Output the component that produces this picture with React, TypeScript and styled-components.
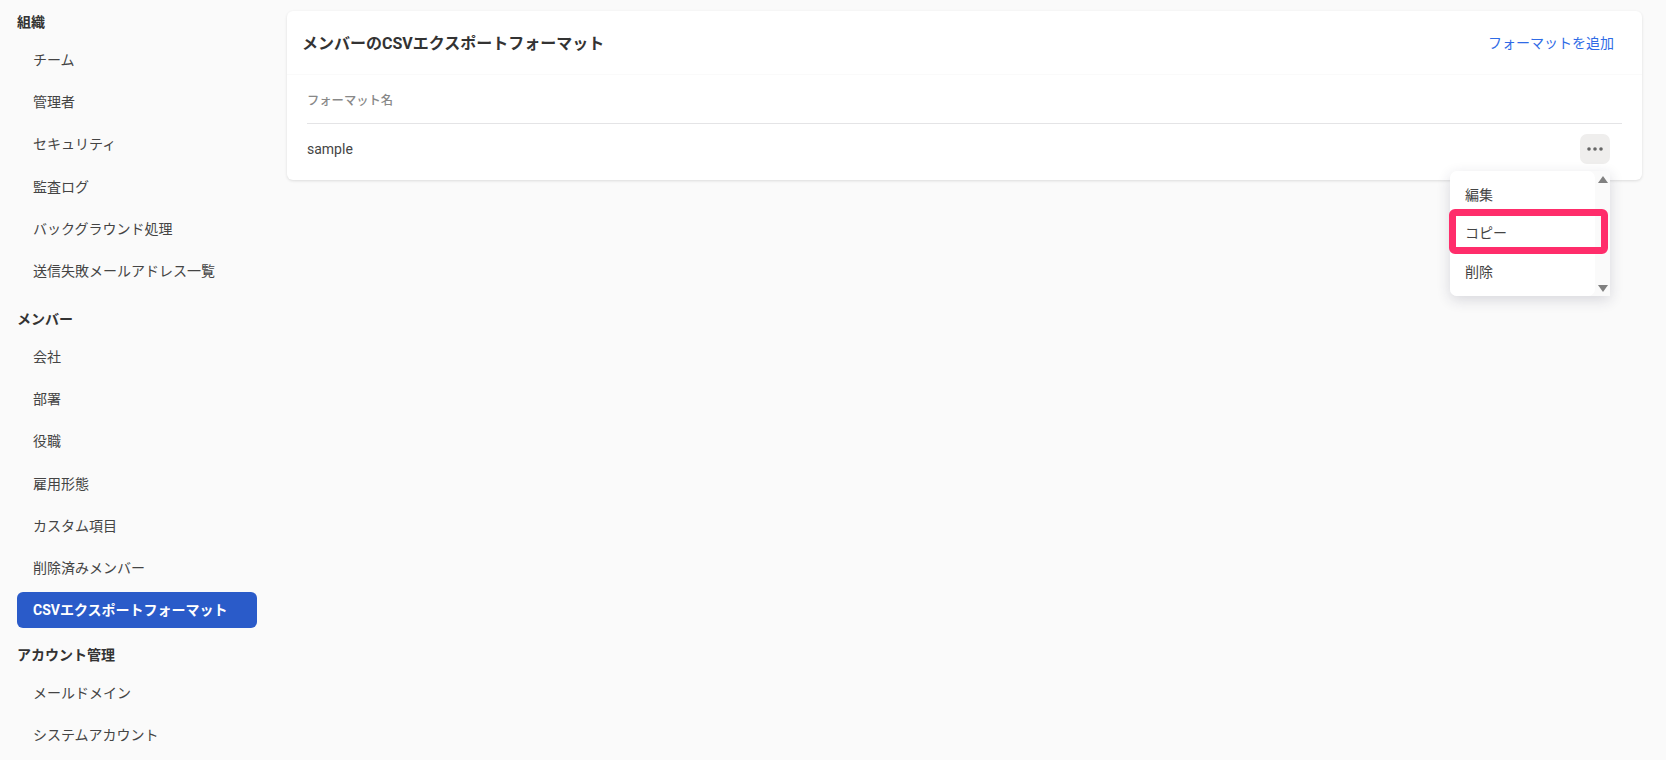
import React from "react";
import styled, { createGlobalStyle } from "styled-components";

const Global = createGlobalStyle`
  html, body { margin: 0; padding: 0; height: 100%; overflow: hidden; background: #fafafa; }
  body { font-family: Roboto, "Noto Sans CJK JP", "Liberation Sans", sans-serif; color: #333; }
`;

const Page = styled.div`
  display: flex;
  width: 1666px;
  height: 760px;
  overflow: hidden;
  background: #fafafa;
`;

const Sidebar = styled.nav`
  width: 287px;
  flex: none;
  box-sizing: border-box;
  padding: 10px 30px 0 17px;
`;

const GroupTitle = styled.div<{ $top?: number }>`
  height: 24px;
  line-height: 24px;
  font-size: 14px;
  font-weight: 700;
  color: #333;
  margin-top: ${(p) => p.$top ?? 0}px;
  margin-bottom: 8px;
`;

const NavItem = styled.div<{ $active?: boolean }>`
  height: 36px;
  line-height: 36px;
  margin-bottom: 6.2px;
  padding-left: 16px;
  border-radius: 6px;
  font-size: 14px;
  white-space: nowrap;
  font-weight: ${(p) => (p.$active ? 700 : 400)};
  color: ${(p) => (p.$active ? "#fff" : "#444")};
  background: ${(p) => (p.$active ? "#2a5bc9" : "transparent")};
`;

const Main = styled.main`
  flex: 1;
  padding: 11px 24px 0 0;
  position: relative;
`;

const Card = styled.section`
  height: 169px;
  background: #fff;
  border-radius: 6px;
  box-shadow: 0 1px 3px rgba(0, 0, 0, 0.12);
  position: relative;
`;

const CardHeader = styled.header`
  height: 63px;
  display: flex;
  align-items: center;
  justify-content: space-between;
  padding: 0 28px 0 15px;
  border-bottom: 1px solid #fafafa;
`;

const CardTitle = styled.h2`
  margin: -2px 0 0;
  font-size: 16px;
  font-weight: 700;
  color: #333;
`;

const AddLink = styled.a`
  margin-top: -2px;
  font-size: 14px;
  color: #2f6be6;
`;

const Table = styled.div`
  padding: 0 20px;
`;

const HeadRow = styled.div`
  height: 49px;
  box-sizing: border-box;
  padding-top: 1px;
  display: flex;
  align-items: center;
  border-bottom: 1px solid #e4e4e6;
  font-size: 12.3px;
  font-weight: 500;
  color: #888;
`;

const BodyRow = styled.div`
  height: 50px;
  display: flex;
  align-items: center;
  justify-content: space-between;
  font-size: 14px;
  color: #444;
  padding-right: 12px;
`;

const MoreButton = styled.button`
  width: 30px;
  height: 30px;
  border: 0;
  padding: 0;
  border-radius: 7px;
  background: #efeeed;
  display: flex;
  align-items: center;
  justify-content: center;
`;

const Menu = styled.div`
  position: absolute;
  left: 1450px;
  top: 171px;
  width: 160px;
  height: 125px;
  background: #fafafa;
  border-radius: 7px 0 0 7px;
  box-shadow: 0 4px 14px rgba(40, 40, 70, 0.16);
  display: flex;
  z-index: 2;
`;

const MenuList = styled.ul`
  flex: 1;
  margin: 0;
  padding: 4.7px 0 0;
  list-style: none;
  background: #fff;
  border-radius: 7px;
`;

const MenuItem = styled.li`
  height: 38.5px;
  line-height: 38.5px;
  padding-left: 15px;
  font-size: 14px;
  color: #444;
`;

const ScrollTrack = styled.div`
  width: 15px;
  flex: none;
  display: flex;
  flex-direction: column;
  align-items: center;
  justify-content: space-between;
  padding: 5px 0 4px;
  box-sizing: border-box;
`;

const Highlight = styled.div`
  position: absolute;
  left: 1449px;
  top: 209px;
  width: 159px;
  height: 45px;
  box-sizing: border-box;
  border: 7px solid #ff2d6b;
  border-radius: 6px;
  z-index: 3;
`;

const groups: { title: string; top?: number; items: string[] }[] = [
  { title: "組織", items: ["チーム", "管理者", "セキュリティ", "監査ログ", "バックグラウンド処理", "送信失敗メールアドレス一覧"] },
  { title: "メンバー", top: 18, items: ["会社", "部署", "役職", "雇用形態", "カスタム項目", "削除済みメンバー", "CSVエクスポートフォーマット"] },
  { title: "アカウント管理", top: 15, items: ["メールドメイン", "システムアカウント"] },
];

export default function App() {
  return (
    <Page>
      <Global />
      <Sidebar>
        {groups.map((g) => (
          <div key={g.title}>
            <GroupTitle $top={g.top}>{g.title}</GroupTitle>
            {g.items.map((i) => (
              <NavItem key={i} $active={i.startsWith("CSV")}>{i}</NavItem>
            ))}
          </div>
        ))}
      </Sidebar>
      <Main>
        <Card>
          <CardHeader>
            <CardTitle>メンバーのCSVエクスポートフォーマット</CardTitle>
            <AddLink>フォーマットを追加</AddLink>
          </CardHeader>
          <Table>
            <HeadRow>フォーマット名</HeadRow>
            <BodyRow>
              <span>sample</span>
              <MoreButton aria-label="more">
                <svg width="16" height="4" viewBox="0 0 16 4">
                  <circle cx="2" cy="2" r="1.8" fill="#666" />
                  <circle cx="8" cy="2" r="1.8" fill="#666" />
                  <circle cx="14" cy="2" r="1.8" fill="#666" />
                </svg>
              </MoreButton>
            </BodyRow>
          </Table>
        </Card>
      </Main>
      <Menu>
        <MenuList>
          <MenuItem>編集</MenuItem>
          <MenuItem>コピー</MenuItem>
          <MenuItem>削除</MenuItem>
        </MenuList>
        <ScrollTrack>
          <svg width="10" height="7" viewBox="0 0 10 7"><path d="M5 0 L10 7 L0 7 Z" fill="#808080" /></svg>
          <svg width="10" height="7" viewBox="0 0 10 7"><path d="M0 0 L10 0 L5 7 Z" fill="#808080" /></svg>
        </ScrollTrack>
      </Menu>
      <Highlight />
    </Page>
  );
}
